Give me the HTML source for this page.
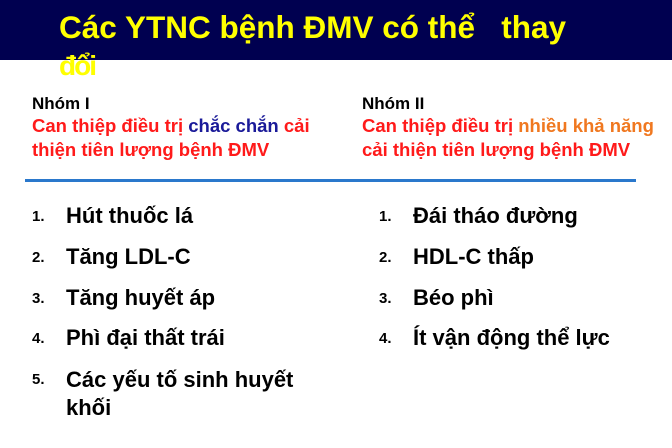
<!DOCTYPE html>
<html><head><meta charset="utf-8"><style>
body{margin:0;width:672px;height:448px;background:#fff;position:relative;overflow:hidden;font-family:"Liberation Sans",Arial,sans-serif;font-weight:bold}
.bar{position:absolute;left:0;top:0;width:672px;height:60px;background:#000050}
.t{position:absolute;white-space:nowrap}
.title{color:#ffff00;font-size:31.5px;left:59px;top:11px;line-height:32px}
.h{font-size:17px;color:#000}
.r{font-size:18.5px;color:#ff1a1a;line-height:24px}
.b{color:#1a1a99}.o{color:#f07820}
.line{position:absolute;left:25px;top:179px;width:611px;height:3px;background:#2a78cc}
.n{font-size:15px;color:#000}
.i{font-size:22px;color:#000}
</style></head><body>
<div class="bar"></div>
<div class="t title">Các YTNC bệnh ĐMV có thể &nbsp;&nbsp;thay</div>
<div class="t title" style="top:50px;font-size:28px;letter-spacing:-2px">đổi</div>
<div class="t h" style="left:32px;top:94px">Nhóm I</div>
<div class="t r" style="left:32px;top:114px">Can thiệp điều trị <span class="b">chắc chắn</span> cải<br>thiện tiên lượng bệnh ĐMV</div>
<div class="t h" style="left:362px;top:94px">Nhóm II</div>
<div class="t r" style="left:362px;top:114px">Can thiệp điều trị <span class="o">nhiều khả năng</span><br>cải thiện tiên lượng bệnh ĐMV</div>
<div class="line"></div>
<div class="t n" style="left:32px;top:208px">1.</div><div class="t i" style="left:66px;top:203px">Hút thuốc lá</div>
<div class="t n" style="left:32px;top:249px">2.</div><div class="t i" style="left:66px;top:244px">Tăng LDL-C</div>
<div class="t n" style="left:32px;top:290px">3.</div><div class="t i" style="left:66px;top:285px">Tăng huyết áp</div>
<div class="t n" style="left:32px;top:330px">4.</div><div class="t i" style="left:66px;top:325px">Phì đại thất trái</div>
<div class="t n" style="left:32px;top:371px">5.</div><div class="t i" style="left:66px;top:366px;line-height:28px;white-space:normal;width:260px">Các yếu tố sinh huyết khối</div>
<div class="t n" style="left:379px;top:208px">1.</div><div class="t i" style="left:413px;top:203px">Đái tháo đường</div>
<div class="t n" style="left:379px;top:249px">2.</div><div class="t i" style="left:413px;top:244px">HDL-C thấp</div>
<div class="t n" style="left:379px;top:290px">3.</div><div class="t i" style="left:413px;top:285px">Béo phì</div>
<div class="t n" style="left:379px;top:330px">4.</div><div class="t i" style="left:413px;top:325px">Ít vận động thể lực</div>
</body></html>
